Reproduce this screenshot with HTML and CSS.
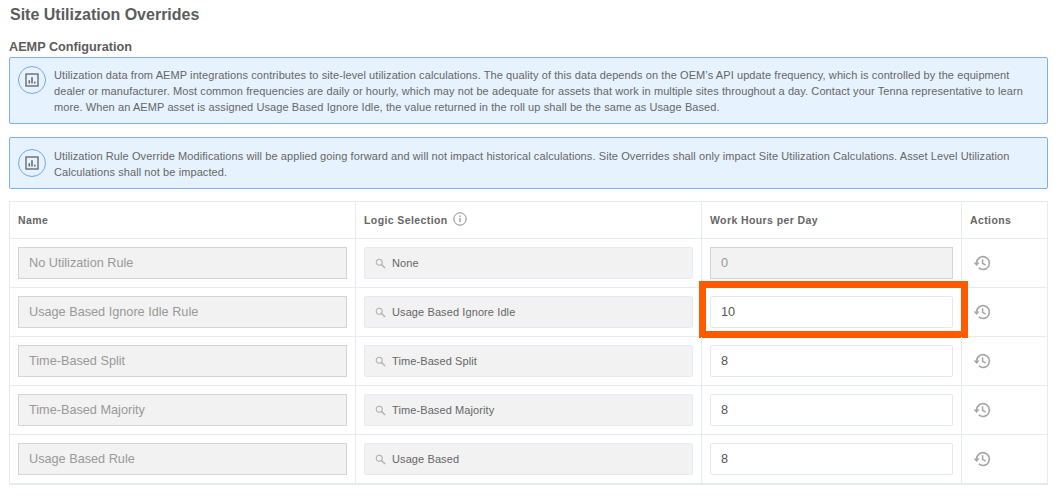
FILE: index.html
```html
<!DOCTYPE html>
<html lang="en">
<head>
<meta charset="utf-8">
<title>Site Utilization Overrides</title>
<link rel="stylesheet" href="styles.css">
</head>
<body>
<svg class="defs" width="0" height="0" aria-hidden="true">
  <symbol id="i-chart" viewBox="0 0 14 14">
    <rect x="1" y="1" width="12" height="12" fill="none" stroke="#5f6368" stroke-width="1.3"/>
    <path d="M4.3 10.4V7.2M7 10.4V4.2M9.8 10.4V8.8" fill="none" stroke="#5f6368" stroke-width="1.5"/>
  </symbol>
  <symbol id="i-search" viewBox="0 0 12 12">
    <circle cx="4.6" cy="4.6" r="3.3" fill="none" stroke="#b0b0b0" stroke-width="1.2"/>
    <path d="M7.1 7.1 11 11" fill="none" stroke="#b0b0b0" stroke-width="1.5"/>
  </symbol>
  <symbol id="i-history" viewBox="0 0 18 18">
    <path d="M3.6 9a6.4 6.4 0 1 1 2.2 4.9" fill="none" stroke="#a6a6a6" stroke-width="1.6"/>
    <path d="M0.6 8.4h6l-3 3.6z" fill="#a6a6a6"/>
    <path d="M9.6 5.2v4.2l3 1.6" fill="none" stroke="#a6a6a6" stroke-width="1.5"/>
  </symbol>
</svg>
<h1 class="title">Site Utilization Overrides</h1>
<h2 class="subtitle">AEMP Configuration</h2>
<div class="alert alert-first">
  <span class="alert-icon"><svg width="14" height="14"><use href="#i-chart"/></svg></span>
  <p class="alert-text">Utilization data from AEMP integrations contributes to site-level utilization calculations. The quality of this data depends on the OEM’s API update frequency, which is controlled by the equipment dealer or manufacturer. Most common frequencies are daily or hourly, which may not be adequate for assets that work in multiple sites throughout a day. Contact your Tenna representative to learn more. When an AEMP asset is assigned Usage Based Ignore Idle, the value returned in the roll up shall be the same as Usage Based.</p>
</div>
<div class="alert alert-second">
  <span class="alert-icon"><svg width="14" height="14"><use href="#i-chart"/></svg></span>
  <p class="alert-text">Utilization Rule Override Modifications will be applied going forward and will not impact historical calculations. Site Overrides shall only impact Site Utilization Calculations. Asset Level Utilization Calculations shall not be impacted.</p>
</div>
<div class="table">
  <div class="row head">
    <div class="cell">Name</div>
    <div class="cell">Logic Selection
      <svg class="info" width="14" height="14" viewBox="0 0 14 14"><circle cx="7" cy="7" r="6.2" fill="none" stroke="#8a8a8a" stroke-width="1"/><path d="M7 6v4.2M7 3.6v1.3" stroke="#8a8a8a" stroke-width="1.2"/></svg>
    </div>
    <div class="cell">Work Hours per Day</div>
    <div class="cell">Actions</div>
  </div>
  <div class="row">
    <div class="cell"><div class="field disabled">No Utilization Rule</div></div>
    <div class="cell"><div class="select"><svg width="11" height="11"><use href="#i-search"/></svg>None</div></div>
    <div class="cell"><div class="field disabled small">0</div></div>
    <div class="cell"><svg class="history" width="18" height="18"><use href="#i-history"/></svg></div>
  </div>
  <div class="row">
    <div class="cell"><div class="field disabled">Usage Based Ignore Idle Rule</div></div>
    <div class="cell"><div class="select"><svg width="11" height="11"><use href="#i-search"/></svg>Usage Based Ignore Idle</div></div>
    <div class="cell highlighted"><div class="field small">10</div><span class="marker"></span></div>
    <div class="cell"><svg class="history" width="18" height="18"><use href="#i-history"/></svg></div>
  </div>
  <div class="row">
    <div class="cell"><div class="field disabled">Time-Based Split</div></div>
    <div class="cell"><div class="select"><svg width="11" height="11"><use href="#i-search"/></svg>Time-Based Split</div></div>
    <div class="cell"><div class="field small">8</div></div>
    <div class="cell"><svg class="history" width="18" height="18"><use href="#i-history"/></svg></div>
  </div>
  <div class="row">
    <div class="cell"><div class="field disabled">Time-Based Majority</div></div>
    <div class="cell"><div class="select"><svg width="11" height="11"><use href="#i-search"/></svg>Time-Based Majority</div></div>
    <div class="cell"><div class="field small">8</div></div>
    <div class="cell"><svg class="history" width="18" height="18"><use href="#i-history"/></svg></div>
  </div>
  <div class="row">
    <div class="cell"><div class="field disabled">Usage Based Rule</div></div>
    <div class="cell"><div class="select"><svg width="11" height="11"><use href="#i-search"/></svg>Usage Based</div></div>
    <div class="cell"><div class="field small">8</div></div>
    <div class="cell"><svg class="history" width="18" height="18"><use href="#i-history"/></svg></div>
  </div>
</div>
</body>
</html>
```
FILE: styles.css
```css
* { box-sizing: border-box; }
html, body { margin: 0; padding: 0; }
body {
  width: 1063px;
  height: 501px;
  overflow: hidden;
  background: #fff;
  font-family: "Liberation Sans", Arial, sans-serif;
  color: #5f6368;
  padding: 5px 15px 0 9px;
}
.defs { position: absolute; }
.title {
  margin: 0 0 0 1px;
  font-size: 16px;
  line-height: 20px;
  font-weight: 700;
  color: #5c5c5c;
}
.subtitle {
  margin: 15px 0 0;
  font-size: 12.7px;
  line-height: 14px;
  font-weight: 700;
  color: #5c5c5c;
}
.alert {
  display: flex;
  align-items: flex-start;
  background: #e6f2fd;
  border: 1px solid #7fb0ea;
  border-radius: 2px;
  padding: 8px 12px 0 8px;
}
.alert-first { height: 67px; margin-top: 3px; }
.alert-second { height: 52px; margin-top: 13px; padding-top: 9px; }
.alert-second .alert-icon { margin-top: 2px; }
.alert-icon {
  flex: none;
  display: flex;
  align-items: center;
  justify-content: center;
  width: 28px;
  height: 28px;
  border: 1px solid #6eaaf0;
  border-radius: 50%;
}
.alert-text {
  margin: 1px 0 0 8px;
  font-size: 11px;
  letter-spacing: 0.09px;
  line-height: 16px;
  color: #666;
}
.table {
  margin-top: 12px;
  border: 1px solid #e6ebf1;
  border-bottom-width: 2px;
  width: 1039px;
}
.row {
  display: grid;
  grid-template-columns: 346px 346px 260px 1fr;
  height: 49px;
  border-bottom: 1px solid #e6ebf1;
}
.row:last-child { border-bottom: 0; height: 48px; }
.head {
  height: 37px;
  font-size: 10.5px;
  font-weight: 700;
  letter-spacing: 0.4px;
  color: #666;
}
.cell {
  position: relative;
  display: flex;
  align-items: center;
  padding: 0 8px;
  border-right: 1px solid #e6ebf1;
}
.cell:last-child { border-right: 0; padding-left: 11px; }
.head .cell:last-child { padding-left: 8px; }
.info { margin-left: 5px; margin-top: -3px; }
.field {
  display: flex;
  align-items: center;
  width: 100%;
  height: 32px;
  padding: 0 10px;
  background: #fff;
  border: 1px solid #e3e9f0;
  border-radius: 2px;
  font-size: 12.7px;
  color: #555;
}
.field.disabled {
  background: #f2f2f2;
  border-color: #d4d4d4;
  border-radius: 0;
  color: #999;
}
.select {
  display: flex;
  align-items: center;
  gap: 6px;
  width: 100%;
  height: 32px;
  padding: 0 10px;
  background: #f2f2f2;
  border: 1px solid #e6ebf1;
  border-radius: 2px;
  font-size: 11px;
  letter-spacing: 0.1px;
  color: #666;
}
.marker {
  position: absolute;
  left: -3px;
  top: -7px;
  width: 269px;
  height: 57px;
  border: 7px solid #ff5a00;
  pointer-events: none;
}
```
